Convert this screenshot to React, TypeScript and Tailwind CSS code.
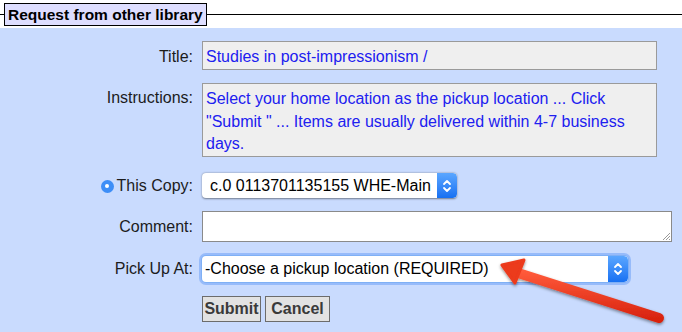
import React from "react"

const font = { fontFamily: '"Liberation Sans", Arial, sans-serif' }

function Stepper() {
  return (
    <div className="flex h-full w-[20px] items-center justify-center rounded-r-[4px] bg-gradient-to-b from-[#5aa6ff] to-[#1670f2]">
      <svg width="10" height="14" viewBox="0 0 10 14" fill="none" stroke="white" strokeWidth="1.8" strokeLinecap="round" strokeLinejoin="round">
        <path d="M2 5 L5 2 L8 5" />
        <path d="M2 9 L5 12 L8 9" />
      </svg>
    </div>
  )
}

function Row({ label, children, top, radio }: { label: string; children: React.ReactNode; top: string; radio?: boolean }) {
  return (
    <div className="flex items-start">
      <div className={`flex w-[193px] shrink-0 items-center justify-end ${top}`}>
        {radio && (
          <span className="mr-[3px] flex h-[13px] w-[13px] items-center justify-center rounded-full bg-[#3d8ef7]">
            <span className="h-[4px] w-[4px] rounded-full bg-white" />
          </span>
        )}
        <span className="text-[16px] leading-[20px] text-[#1c1c1c]">{label}</span>
      </div>
      <div className="ml-[9px]">{children}</div>
    </div>
  )
}

export default function App() {
  return (
    <div className="relative h-[332px] w-[682px] overflow-hidden bg-white" style={font}>
      {/* fieldset legend strip */}
      <div className="flex h-[28px] items-start pt-[3px]">
        <div className="flex h-[23px] w-full items-center">
          <div className="h-px w-[4px] bg-black" />
          <div className="flex h-[23px] items-center border border-black bg-[#dedeff] px-[3px] text-[15.5px] font-bold text-black">
            Request from other library
          </div>
          <div className="h-px flex-1 bg-black" />
        </div>
      </div>

      <div className="flex h-[304px] flex-col bg-[#c9dbfe] pt-[13px]">
        <Row label="Title:" top="pt-[6px]">
          <div className="h-[29px] w-[455px] border border-[#9a9a9a] bg-[#efefef] px-[3px] pt-[4px] text-[16px] leading-[21px] text-[#2020f0]">
            Studies in post-impressionism /
          </div>
        </Row>

        <div className="mt-[13px]">
          <Row label="Instructions:" top="pt-[5px]">
            <div className="h-[74px] w-[455px] border border-[#9a9a9a] bg-[#efefef] px-[3px] pt-[4px] text-[16px] leading-[22.5px] text-[#2020f0]">
              Select your home location as the pickup location ... Click "Submit " ... Items are usually delivered within 4-7 business days.
            </div>
          </Row>
        </div>

        <div className="mt-[16px]">
          <Row label="This Copy:" top="pt-[3px]" radio>
            <div className="flex h-[25px] w-[255px] items-center overflow-hidden rounded-[4px] bg-white shadow-[0_0.5px_2px_rgba(0,0,0,0.45)]">
              <span className="flex-1 pl-[8px] text-[16px] leading-[20px] text-black">c.0 0113701135155 WHE-Main</span>
              <Stepper />
            </div>
          </Row>
        </div>

        <div className="mt-[13px]">
          <Row label="Comment:" top="pt-[6px]">
            <div className="relative h-[31px] w-[470px] border border-[#8a8a8a] bg-white">
              <svg className="absolute bottom-0 right-0" width="10" height="10" viewBox="0 0 10 10" stroke="#9a9a9a" strokeWidth="1">
                <path d="M9 2 L2 9 M9 5 L5 9 M9 8 L8 9" />
              </svg>
            </div>
          </Row>
        </div>

        <div className="mt-[14px]">
          <Row label="Pick Up At:" top="pt-[3px]">
            <div className="flex h-[26px] w-[426px] items-center overflow-hidden rounded-[4px] bg-white shadow-[0_0_0_1px_#7fb0f5,0_0_0_3px_rgba(110,160,245,0.55)]">
              <span className="flex-1 pl-[3px] text-[16px] leading-[20px] text-black">-Choose a pickup location (REQUIRED)</span>
              <Stepper />
            </div>
          </Row>
        </div>

        <div className="ml-[202px] mt-[14px] flex gap-[4px]">
          <button className="h-[26px] w-[59px] border border-[#6c6c6c] bg-[#e2e2e2] text-[16px] font-bold text-[#3a3a3a]">Submit</button>
          <button className="h-[26px] w-[65px] border border-[#6c6c6c] bg-[#e2e2e2] text-[16px] font-bold text-[#3a3a3a]">Cancel</button>
        </div>
      </div>

      {/* annotation arrow */}
      <svg className="absolute left-0 top-0" width="682" height="332" viewBox="0 0 682 332">
        <defs>
          <filter id="sh" x="-10%" y="-10%" width="120%" height="140%">
            <feDropShadow dx="0" dy="1.5" stdDeviation="1.5" floodColor="#000" floodOpacity="0.45" />
          </filter>
          <linearGradient id="rg" x1="0" y1="0" x2="0" y2="1">
            <stop offset="0" stopColor="#ff5a3a" />
            <stop offset="1" stopColor="#d92410" />
          </linearGradient>
        </defs>
        <g filter="url(#sh)">
          <line x1="659" y1="318" x2="515" y2="272" stroke="url(#rg)" strokeWidth="10" strokeLinecap="round" />
          <path d="M502 265 L524 260 L515 283 Z" fill="#ec3a1e" stroke="#ec3a1e" strokeWidth="3" strokeLinejoin="round" />
        </g>
      </svg>
    </div>
  )
}
